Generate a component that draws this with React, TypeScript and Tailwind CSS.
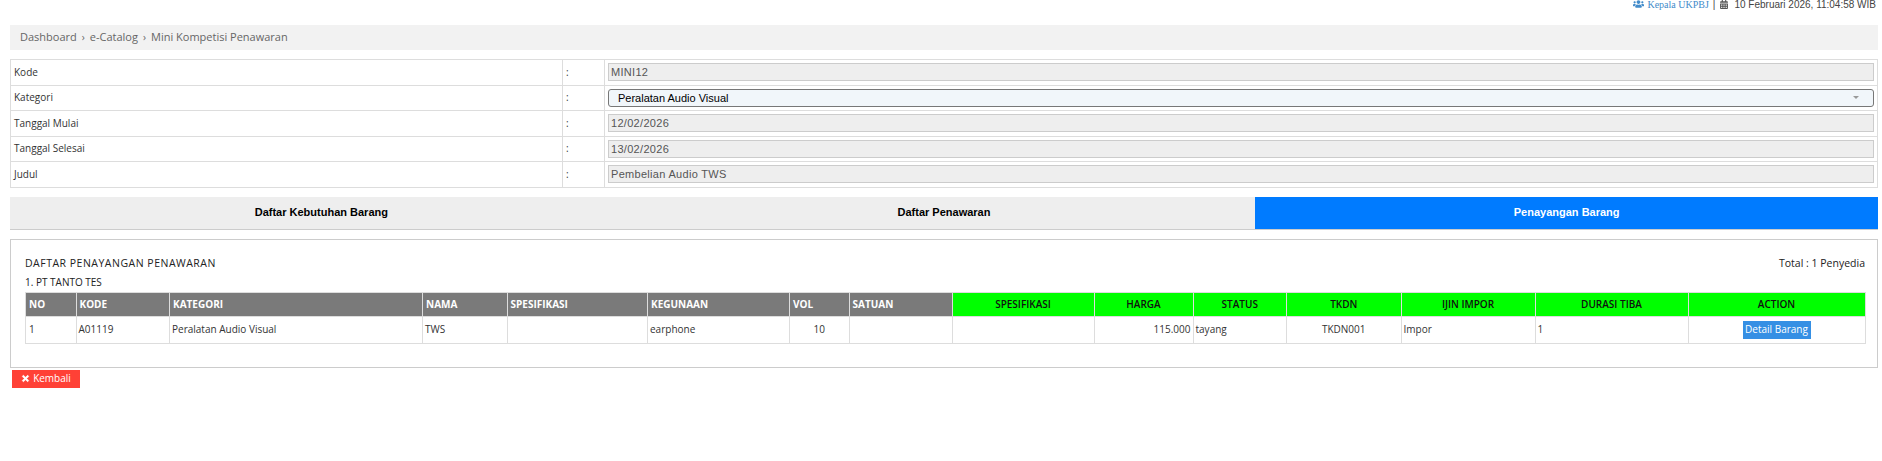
import React from "react";
import {FaCalendarAlt, FaTimes, FaUsers} from "react-icons/fa";

const formRows = [
    {label: "Kode", value: "MINI12"},
    {label: "Kategori", value: "Peralatan Audio Visual", select: true},
    {label: "Tanggal Mulai", value: "12/02/2026"},
    {label: "Tanggal Selesai", value: "13/02/2026"},
    {label: "Judul", value: "Pembelian Audio TWS"}
];

const greyHeads = [
    {label: "NO", width: "w-[50.5px]"},
    {label: "KODE", width: "w-[93.5px]"},
    {label: "KATEGORI", width: "w-[253px]"},
    {label: "NAMA", width: "w-[84.5px]"},
    {label: "SPESIFIKASI", width: "w-[140.5px]"},
    {label: "KEGUNAAN", width: "w-[142px]"},
    {label: "VOL", width: "w-[59.5px]"},
    {label: "SATUAN", width: "w-[103px]"}
];

const greenHeads = [
    {label: "SPESIFIKASI", width: "w-[142px]"},
    {label: "HARGA", width: "w-[99px]"},
    {label: "STATUS", width: "w-[93.5px]"},
    {label: "TKDN", width: "w-[114.5px]"},
    {label: "IJIN IMPOR", width: "w-[134px]"},
    {label: "DURASI TIBA", width: "w-[153px]"},
    {label: "ACTION", width: "w-[177px]"}
];

const cell = "border border-[#dddddd] px-[3px] text-[10px] text-[#333333]";
const dataCell = "border border-[#dddddd] px-[2px] text-[10px] text-[#333333]";

const App = () => {
    return (
        <div className="min-h-[461px] bg-white pr-[4px] pl-[10px] font-['Open_Sans',sans-serif] text-[#333333]">
            <div className="flex h-[25px] items-start justify-end pr-[2px] font-['Liberation_Sans',sans-serif] text-[10px] leading-[9px] text-[#444444]">
                <FaUsers className="mr-[3px] h-[10px] w-[11px] -translate-y-[1px] text-[#428bca]" />
                <span className="font-['Liberation_Serif',serif] text-[#428bca]">Kepala UKPBJ</span>
                <span className="mx-[4px]">|</span>
                <FaCalendarAlt className="mr-[5px] h-[9px] w-[10px] text-[#555555]" />
                <span>10 Februari 2026, 11:04:58 WIB</span>
            </div>

            <div className="flex h-[25px] items-center bg-[#f2f2f2] pl-[10px] text-[11px] text-[#666666]">
                Dashboard <span className="mx-[5px] text-[10px]">›</span> e-Catalog{" "}
                <span className="mx-[5px] text-[10px]">›</span> Mini Kompetisi Penawaran
            </div>

            <table className="mt-[9px] w-full table-fixed border-collapse border border-[#dddddd]">
                <colgroup>
                    <col className="w-[552px]" />
                    <col className="w-[42px]" />
                    <col />
                </colgroup>
                <tbody>
                    {formRows.map((row) => (
                        <tr key={row.label} className="h-[25.5px]">
                            <td className={cell}>{row.label}</td>
                            <td className={cell}>:</td>
                            <td className="border border-[#dddddd] px-[3px]">
                                {row.select ? (
                                    <div className="flex h-[18px] items-center justify-between rounded-[3px] border border-[#777777] bg-[#f1f6fa] pr-[14px] pl-[9px] font-['Liberation_Sans',sans-serif] text-[11px] text-black">
                                        Peralatan Audio Visual
                                        <span className="h-0 w-0 border-x-[3px] border-t-[3px] border-x-transparent border-t-[#999999]" />
                                    </div>
                                ) : (
                                    <div className="flex h-[18px] items-center border border-[#cccccc] bg-[#eeeeee] px-[2px] font-['Liberation_Sans',sans-serif] text-[11px] tracking-[0.3px] text-[#555555]">
                                        {row.value}
                                    </div>
                                )}
                            </td>
                        </tr>
                    ))}
                </tbody>
            </table>

            <div className="mt-[9px] grid h-[33px] grid-cols-3 border-b border-[#cccccc] bg-[#eeeeee] font-['Liberation_Sans',sans-serif] text-[11px] font-bold text-black">
                <div className="flex items-center justify-center">Daftar Kebutuhan Barang</div>
                <div className="flex items-center justify-center">Daftar Penawaran</div>
                <div className="flex items-center justify-center bg-[#007bff] text-white">Penayangan Barang</div>
            </div>

            <div className="mt-[9px] h-[129px] border border-[#cccccc] pt-[16px] pr-[12px] pl-[14px]">
                <div className="flex items-center justify-between text-[#222222]">
                    <span className="text-[10.5px] leading-[15px] font-medium tracking-[0.5px]">
                        DAFTAR PENAYANGAN PENAWARAN
                    </span>
                    <span className="text-[10.5px] leading-[15px] font-medium">Total : 1 Penyedia</span>
                </div>
                <div className="mt-[4px] text-[10px] leading-[15px] font-medium text-[#222222]">1. PT TANTO TES</div>
                <table className="mt-[2px] w-[1840px] table-fixed border-collapse border border-[#dddddd]">
                    <thead>
                        <tr className="h-[24px] text-[10px] font-bold">
                            {greyHeads.map((h) => (
                                <th
                                    key={h.label}
                                    className={`${h.width} border border-[#dddddd] bg-[#7a7a7a] px-[3px] text-left text-white`}>
                                    {h.label}
                                </th>
                            ))}
                            {greenHeads.map((h) => (
                                <th
                                    key={h.label}
                                    className={`${h.width} border border-[#dddddd] bg-[#00ff00] px-[3px] text-center font-semibold text-[#111111]`}>
                                    {h.label}
                                </th>
                            ))}
                        </tr>
                    </thead>
                    <tbody>
                        <tr className="h-[27px]">
                            <td className={cell}>1</td>
                            <td className={dataCell}>A01119</td>
                            <td className={dataCell}>Peralatan Audio Visual</td>
                            <td className={dataCell}>TWS</td>
                            <td className={dataCell}></td>
                            <td className={dataCell}>earphone</td>
                            <td className={`${dataCell} text-center`}>10</td>
                            <td className={dataCell}></td>
                            <td className={dataCell}></td>
                            <td className={`${dataCell} text-right`}>115.000</td>
                            <td className={dataCell}>tayang</td>
                            <td className={`${dataCell} text-center`}>TKDN001</td>
                            <td className={dataCell}>Impor</td>
                            <td className={dataCell}>1</td>
                            <td className={`${dataCell} text-center`}>
                                <button
                                    type="button"
                                    className="h-[18px] w-[68px] bg-[#358fe4] align-middle text-[10px] whitespace-nowrap text-white">
                                    Detail Barang
                                </button>
                            </td>
                        </tr>
                    </tbody>
                </table>
            </div>

            <button
                type="button"
                className="mt-[2px] ml-[2px] flex h-[18px] w-[68px] items-center justify-center gap-[3px] bg-[#ff4136] text-[10px] text-white">
                <FaTimes className="h-[9px] w-[9px] [stroke-width:40]" />
                Kembali
            </button>
        </div>
    );
};

export default App;
